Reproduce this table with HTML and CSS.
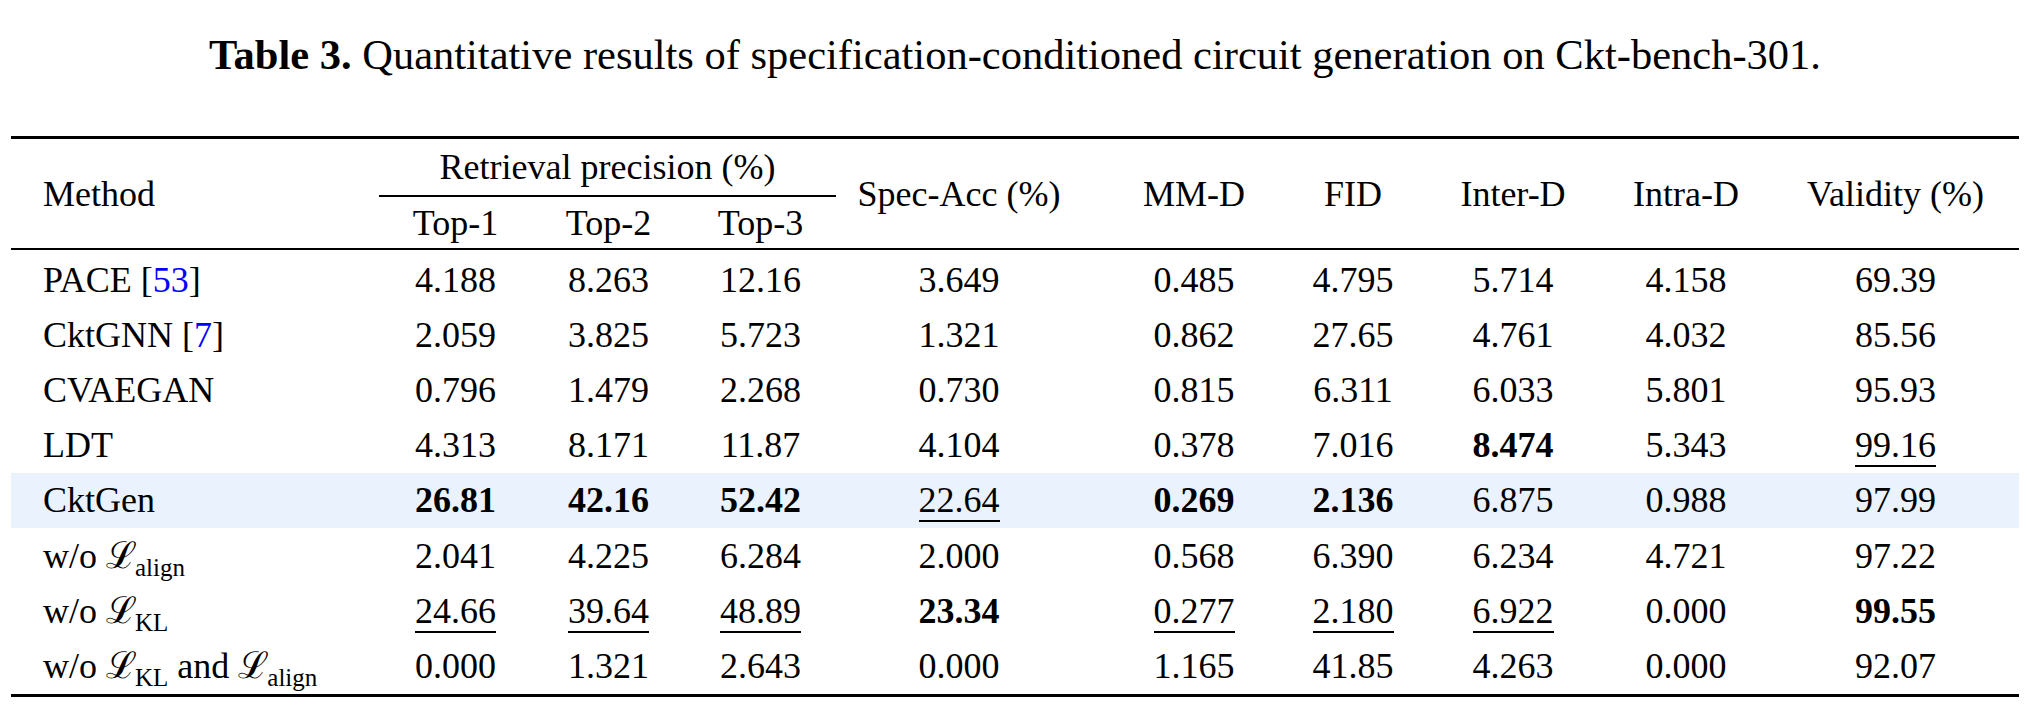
FILE: index.html
```html
<!DOCTYPE html>
<html lang="en">
<head>
<meta charset="utf-8">
<title>Table 3</title>
<link rel="stylesheet" href="styles.css">
</head>
<body>
<div class="page">
  <p class="caption"><b>Table 3.</b> Quantitative results of specification-conditioned circuit generation on Ckt-bench-301.</p>
  <table class="results">
    <colgroup>
      <col class="w-method">
      <col class="w-top1">
      <col class="w-top2">
      <col class="w-top3">
      <col class="w-spec">
      <col class="w-mmd">
      <col class="w-fid">
      <col class="w-inter">
      <col class="w-intra">
      <col class="w-valid">
    </colgroup>
    <thead>
      <tr class="head1">
        <th rowspan="2" class="method">Method</th>
        <th colspan="3" class="group">Retrieval precision (%)</th>
        <th rowspan="2" class="c-spec">Spec-Acc (%)</th>
        <th rowspan="2" class="c-mmd">MM-D</th>
        <th rowspan="2">FID</th>
        <th rowspan="2">Inter-D</th>
        <th rowspan="2" class="c-intra">Intra-D</th>
        <th rowspan="2">Validity (%)</th>
      </tr>
      <tr class="head2">
        <th>Top-1</th>
        <th>Top-2</th>
        <th>Top-3</th>
      </tr>
    </thead>
    <tbody>
      <tr>
        <td class="method">PACE [<span class="cite">53</span>]</td>
        <td>4.188</td><td>8.263</td><td>12.16</td><td class="c-spec">3.649</td><td class="c-mmd">0.485</td><td>4.795</td><td>5.714</td><td class="c-intra">4.158</td><td>69.39</td>
      </tr>
      <tr>
        <td class="method">CktGNN [<span class="cite">7</span>]</td>
        <td>2.059</td><td>3.825</td><td>5.723</td><td class="c-spec">1.321</td><td class="c-mmd">0.862</td><td>27.65</td><td>4.761</td><td class="c-intra">4.032</td><td>85.56</td>
      </tr>
      <tr>
        <td class="method">CVAEGAN</td>
        <td>0.796</td><td>1.479</td><td>2.268</td><td class="c-spec">0.730</td><td class="c-mmd">0.815</td><td>6.311</td><td>6.033</td><td class="c-intra">5.801</td><td>95.93</td>
      </tr>
      <tr>
        <td class="method">LDT</td>
        <td>4.313</td><td>8.171</td><td>11.87</td><td class="c-spec">4.104</td><td class="c-mmd">0.378</td><td>7.016</td><td><b>8.474</b></td><td class="c-intra">5.343</td><td><span class="second">99.16</span></td>
      </tr>
      <tr class="ours">
        <td class="method">CktGen</td>
        <td><b>26.81</b></td><td><b>42.16</b></td><td><b>52.42</b></td><td class="c-spec"><span class="second">22.64</span></td><td class="c-mmd"><b>0.269</b></td><td><b>2.136</b></td><td>6.875</td><td class="c-intra">0.988</td><td>97.99</td>
      </tr>
      <tr>
        <td class="method">w/o <span class="loss">ℒ</span><sub>align</sub></td>
        <td>2.041</td><td>4.225</td><td>6.284</td><td class="c-spec">2.000</td><td class="c-mmd">0.568</td><td>6.390</td><td>6.234</td><td class="c-intra">4.721</td><td>97.22</td>
      </tr>
      <tr>
        <td class="method">w/o <span class="loss">ℒ</span><sub>KL</sub></td>
        <td><span class="second">24.66</span></td><td><span class="second">39.64</span></td><td><span class="second">48.89</span></td><td class="c-spec"><b>23.34</b></td><td class="c-mmd"><span class="second">0.277</span></td><td><span class="second">2.180</span></td><td><span class="second">6.922</span></td><td class="c-intra">0.000</td><td><b>99.55</b></td>
      </tr>
      <tr>
        <td class="method">w/o <span class="loss">ℒ</span><sub>KL</sub> and <span class="loss">ℒ</span><sub>align</sub></td>
        <td>0.000</td><td>1.321</td><td>2.643</td><td class="c-spec">0.000</td><td class="c-mmd">1.165</td><td>41.85</td><td>4.263</td><td class="c-intra">0.000</td><td>92.07</td>
      </tr>
    </tbody>
  </table>
</div>
</body>
</html>
```
FILE: styles.css
```css
html, body {
  margin: 0;
  padding: 0;
  background: #ffffff;
}

.page {
  padding: 0 8px 0 11px;
  font-family: "Liberation Serif", "Times New Roman", serif;
  color: #000000;
}

.caption {
  margin: 0;
  padding-top: 30px;
  font-size: 42.5px;
  line-height: 50px;
  text-align: center;
}

.caption b {
  font-weight: bold;
}

.results {
  margin-top: 56px;
  width: 2008px;
  table-layout: fixed;
  border-collapse: separate;
  border-spacing: 0;
  border-top: 3px solid #000;
  border-bottom: 3px solid #000;
  font-size: 36px;
}

.w-method { width: 368px; }
.w-top1 { width: 153px; }
.w-top2 { width: 153px; }
.w-top3 { width: 151px; }
.w-spec { width: 240px; }
.w-mmd { width: 232px; }
.w-fid { width: 90px; }
.w-inter { width: 230px; }
.w-intra { width: 144px; }
.w-valid { width: 247px; }

.results th,
.results td {
  padding: 0;
  font-weight: normal;
  text-align: center;
  vertical-align: middle;
  white-space: nowrap;
  line-height: 40px;
}

.results .method {
  text-align: left;
  padding-left: 32px;
}

.results .c-spec { padding-left: 6px; }
.results .c-mmd { padding-left: 4px; }
.results .c-intra { padding-right: 28px; }

.head1 th {
  height: 56px;
}

.head1 th.group {
  border-bottom: 2px solid #000;
}

.head2 th {
  height: 51px;
}

.results tbody tr td {
  height: 55.2px;
}

.results tbody tr:first-child td {
  border-top: 2px solid #000;
  padding-top: 2px;
}

.results tr.ours {
  background: #eaf2fd;
}

.results b {
  font-weight: bold;
}

.cite {
  color: #0000ff;
}

.second {
  border-bottom: 2px solid #000;
  padding-bottom: 0;
}

.loss {
  font-family: "DejaVu Serif", serif;
  font-size: 37px;
  letter-spacing: -2px;
}

.results sub {
  font-size: 25px;
  vertical-align: -8px;
  line-height: 0;
}
```
